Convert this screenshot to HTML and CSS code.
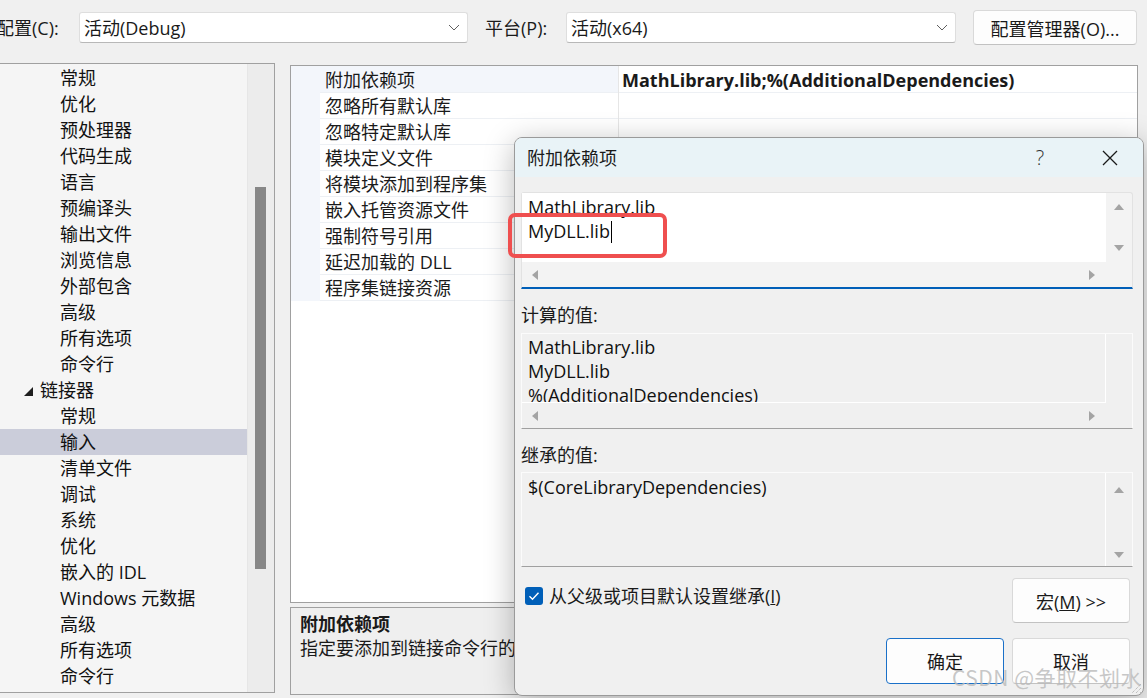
FILE: index.html
```html
<!DOCTYPE html>
<html lang="zh-CN">
<head>
<meta charset="utf-8">
<title>附加依赖项</title>
<link rel="stylesheet" href="styles.css">
</head>
<body>
<div class="page">
  <div class="topbar">
    <span class="lbl lbl-config">配置(C):</span>
    <div class="combo combo-config">
      <span class="combo-text">活动(Debug)</span>
      <svg class="chev" width="12" height="7" viewBox="0 0 12 7"><path d="M1 1 L6 6 L11 1" fill="none" stroke="#5f5f5f" stroke-width="1"/></svg>
    </div>
    <span class="lbl lbl-platform">平台(P):</span>
    <div class="combo combo-platform">
      <span class="combo-text">活动(x64)</span>
      <svg class="chev" width="12" height="7" viewBox="0 0 12 7"><path d="M1 1 L6 6 L11 1" fill="none" stroke="#5f5f5f" stroke-width="1"/></svg>
    </div>
    <button class="btn btn-manager">配置管理器(O)...</button>
  </div>

  <div class="main">
    <div class="tree">
      <ul class="tree-list">
        <li class="ti">常规</li>
        <li class="ti">优化</li>
        <li class="ti">预处理器</li>
        <li class="ti">代码生成</li>
        <li class="ti">语言</li>
        <li class="ti">预编译头</li>
        <li class="ti">输出文件</li>
        <li class="ti">浏览信息</li>
        <li class="ti">外部包含</li>
        <li class="ti">高级</li>
        <li class="ti">所有选项</li>
        <li class="ti">命令行</li>
        <li class="ti parent"><svg class="tri" width="9" height="9" viewBox="0 0 9 9"><polygon points="0,9 9,0 9,9" fill="#1e1e1e"/></svg><span>链接器</span></li>
        <li class="ti">常规</li>
        <li class="ti sel">输入</li>
        <li class="ti">清单文件</li>
        <li class="ti">调试</li>
        <li class="ti">系统</li>
        <li class="ti">优化</li>
        <li class="ti">嵌入的 IDL</li>
        <li class="ti">Windows 元数据</li>
        <li class="ti">高级</li>
        <li class="ti">所有选项</li>
        <li class="ti">命令行</li>
      </ul>
      <div class="vscroll"><div class="thumb"></div></div>
    </div>

    <div class="right">
      <div class="grid">
        <div class="prow sel"><span class="gut"></span><span class="pname">附加依赖项</span><span class="pval">MathLibrary.lib;%(AdditionalDependencies)</span></div>
        <div class="prow"><span class="gut"></span><span class="pname">忽略所有默认库</span><span class="pval"></span></div>
        <div class="prow"><span class="gut"></span><span class="pname">忽略特定默认库</span><span class="pval"></span></div>
        <div class="prow"><span class="gut"></span><span class="pname">模块定义文件</span><span class="pval"></span></div>
        <div class="prow"><span class="gut"></span><span class="pname">将模块添加到程序集</span><span class="pval"></span></div>
        <div class="prow"><span class="gut"></span><span class="pname">嵌入托管资源文件</span><span class="pval"></span></div>
        <div class="prow"><span class="gut"></span><span class="pname">强制符号引用</span><span class="pval"></span></div>
        <div class="prow"><span class="gut"></span><span class="pname">延迟加载的 DLL</span><span class="pval"></span></div>
        <div class="prow"><span class="gut"></span><span class="pname">程序集链接资源</span><span class="pval"></span></div>
      </div>
      <div class="desc">
        <div class="desc-title">附加依赖项</div>
        <div class="desc-text">指定要添加到链接命令行的附加项 [例如 kernel32.lib]</div>
      </div>
    </div>
  </div>
</div>

<div class="dialog">
  <div class="dlg-title">
    <span class="dlg-name">附加依赖项</span>
    <span class="tbtn help">?</span>
    <span class="tbtn close"><svg width="16" height="16" viewBox="0 0 16 16"><path d="M1 1 L15 15 M15 1 L1 15" stroke="#1a1a1a" stroke-width="1.3" fill="none"/></svg></span>
  </div>
  <div class="dlg-body">
    <div class="box edit">
      <div class="txt">MathLibrary.lib
MyDLL.lib<span class="caret"></span></div>
      <div class="vs"><span class="arr up"></span><span class="arr down"></span></div>
      <div class="hs"><span class="arr left"></span><span class="arr rightarr"></span></div>
      <div class="corner"></div>
    </div>

    <div class="field-label">计算的值:</div>
    <div class="box ro ro-computed">
      <div class="txt">MathLibrary.lib
MyDLL.lib
%(AdditionalDependencies)</div>
      <div class="vs"></div>
      <div class="hs"><span class="arr left"></span><span class="arr rightarr"></span></div>
      <div class="corner"></div>
    </div>

    <div class="field-label second">继承的值:</div>
    <div class="box ro ro-inherit">
      <div class="txt">$(CoreLibraryDependencies)</div>
      <div class="vs vs-inherit"><span class="arr up"></span><span class="arr down"></span></div>
    </div>

    <div class="check-row">
      <label class="chk">
        <span class="chkbox"><svg width="12" height="10" viewBox="0 0 12 10"><path d="M1.5 5.2 L4.5 8.2 L10.5 1.8" fill="none" stroke="#fff" stroke-width="1.4"/></svg></span>
        <span class="chk-text">从父级或项目默认设置继承(<u>I</u>)</span>
      </label>
      <button class="btn dbtn macro">宏(<u>M</u>) &gt;&gt;</button>
    </div>

    <div class="btn-row">
      <button class="btn dbtn primary">确定</button>
      <button class="btn dbtn">取消</button>
    </div>
  </div>
  <svg class="grip" width="12" height="12" viewBox="0 0 12 12"><path d="M11 2 L2 11 M11 6 L6 11 M11 10 L10 11" stroke="#a8a8a8" stroke-width="1" stroke-dasharray="1 1" fill="none"/></svg>
</div>

<div class="highlight"></div>
<div class="watermark">CSDN @争取不划水</div>
</body>
</html>
```

FILE: styles.css
```css
* {
  box-sizing: border-box;
  margin: 0;
  padding: 0;
}

html,
body {
  width: 1147px;
  height: 698px;
  overflow: hidden;
}

body {
  position: relative;
  background: #f0f0f0;
  font-family: "Open Sans", "Noto Sans CJK SC", sans-serif;
  font-size: 18px;
  color: #1a1a1a;
}

/* ---------- top bar ---------- */
.topbar {
  display: flex;
  align-items: center;
  height: 55px;
}

.lbl {
  white-space: nowrap;
  line-height: 24px;
}

.lbl-config {
  margin-left: -4px;
  width: 83px;
}

.lbl-platform {
  margin-left: 17px;
  width: 81px;
}

.combo {
  display: flex;
  align-items: center;
  justify-content: space-between;
  height: 31px;
  padding-left: 4px;
  padding-right: 7px;
  background: #ffffff;
  border: 1px solid #dedede;
  border-bottom-color: #b8b8b8;
  border-radius: 3px;
}

.combo-config {
  width: 389px;
}

.combo-platform {
  width: 390px;
}

.combo-text {
  line-height: 24px;
}

.btn {
  font-family: "Open Sans", "Noto Sans CJK SC", sans-serif;
  font-size: 18px;
  color: #1a1a1a;
  background: #fdfdfd;
  border: 1px solid #d9d9d9;
  border-bottom-color: #c2c2c2;
  border-radius: 4px;
}

.btn-manager {
  margin-left: 17px;
  width: 164px;
  height: 35px;
}

/* ---------- main ---------- */
.main {
  display: flex;
  margin-top: 8px;
}

.tree {
  display: flex;
  margin-left: -2px;
  width: 277px;
  height: 630px;
  border: 1px solid #a0a0a0;
  background: #f5f5f5;
}

.tree-list {
  width: 248px;
  padding-top: 1px;
  list-style: none;
}

.ti {
  display: flex;
  align-items: center;
  height: 26px;
  line-height: 26px;
  padding-left: 61px;
  white-space: nowrap;
  color: #111;
}

.ti.parent {
  padding-left: 25px;
}

.ti .tri {
  margin-right: 7px;
  margin-top: 2px;
}

.ti.sel {
  background: #cbcdda;
}

.vscroll {
  width: 27px;
  background: #ececec;
  padding-left: 7px;
  border-left: 1px solid #e6e6e6;
}

.thumb {
  width: 11px;
  height: 382px;
  margin-top: 123px;
  background: #878787;
}

/* ---------- right column ---------- */
.right {
  display: flex;
  flex-direction: column;
  margin-left: 15px;
  width: 848px;
  padding-top: 2px;
}

.grid {
  height: 538px;
  border: 1px solid #a0a0a0;
  background: #ffffff;
}

.prow {
  display: grid;
  grid-template-columns: 29px 298px 1fr;
  height: 26px;
}

.gut {
  background: #f3f6fb;
}

.pname {
  padding-left: 5px;
  padding-top: 2px;
  line-height: 24px;
  border-bottom: 1px solid #edf0f4;
  white-space: nowrap;
}

.pval {
  padding-left: 3px;
  padding-top: 2px;
  line-height: 24px;
  border-left: 1px solid #e6e6e6;
  border-bottom: 1px solid #edf0f4;
  white-space: nowrap;
  font-weight: 700;
}

.prow.sel .pname {
  background: #f3f6fb;
}

.desc {
  margin-top: 4px;
  height: 88px;
  border: 1px solid #a0a0a0;
  background: #efefef;
  padding: 4px 9px 0 9px;
  line-height: 24px;
  white-space: nowrap;
  overflow: hidden;
}

.desc-title {
  font-weight: 700;
}

/* ---------- dialog ---------- */
.dialog {
  position: absolute;
  left: 514px;
  top: 137px;
  width: 630px;
  height: 559px;
  display: flex;
  flex-direction: column;
  background: #f0f0f0;
  border: 1px solid #9a9a9a;
  border-radius: 8px;
  box-shadow: 0 6px 30px rgba(0, 0, 0, 0.28);
  overflow: hidden;
}

.dlg-title {
  display: flex;
  align-items: center;
  height: 39px;
  padding-left: 12px;
  padding-right: 10px;
  background: #e9f3f7;
}

.dlg-name {
  flex: 1;
  line-height: 24px;
}

.tbtn {
  display: flex;
  align-items: center;
  justify-content: center;
  width: 46px;
  height: 39px;
}

.help {
  font-weight: 300;
  font-size: 20px;
  color: #333;
}

.close {
  margin-left: 24px;
}

.dlg-body {
  padding: 15px 10px 0 6px;
}

.box {
  display: grid;
  grid-template-columns: 1fr 26px;
}

.edit {
  grid-template-rows: 69px 25px;
  background: #f3f3f3;
  border: 1px solid #e2e2e2;
  border-bottom: 2px solid #005fb8;
  border-radius: 3px 3px 0 0;
}

.txt {
  padding: 2px 6px 0 6px;
  line-height: 24px;
  white-space: pre;
  overflow: hidden;
  color: #111;
}

.edit .txt {
  background: #ffffff;
}

.caret {
  display: inline-block;
  width: 1px;
  height: 22px;
  margin-left: 1px;
  background: #000;
  vertical-align: -5px;
}

.vs {
  display: flex;
  flex-direction: column;
  align-items: center;
  justify-content: space-between;
  padding: 11px 0 11px 0;
}

.hs {
  display: flex;
  align-items: center;
  justify-content: space-between;
  padding: 0 11px 0 10px;
}

.arr {
  display: block;
  width: 0;
  height: 0;
}

.arr.up {
  border-left: 5px solid transparent;
  border-right: 5px solid transparent;
  border-bottom: 6px solid #a4a4a4;
}

.arr.down {
  border-left: 5px solid transparent;
  border-right: 5px solid transparent;
  border-top: 6px solid #a4a4a4;
}

.arr.left {
  border-top: 5px solid transparent;
  border-bottom: 5px solid transparent;
  border-right: 6px solid #a4a4a4;
}

.arr.rightarr {
  border-top: 5px solid transparent;
  border-bottom: 5px solid transparent;
  border-left: 6px solid #a4a4a4;
}

.field-label {
  margin-top: 14px;
  line-height: 24px;
}

.ro {
  background: #f0f0f0;
  border: 1px solid #fbfbfb;
  border-bottom: 1px solid #a0a0a0;
  margin-top: 6px;
}

.ro .txt {
  border-right: 1px solid #ffffff;
}

.ro-computed {
  grid-template-rows: 69px 25px;
}

.ro-computed .txt {
  padding-top: 1px;
  border-bottom: 1px solid #ffffff;
}

.field-label.second {
  margin-top: 14px;
}

.ro-inherit {
  height: 95px;
  margin-top: 5px;
}

.vs-inherit {
  padding: 14px 0 8px 0;
}

.check-row {
  display: flex;
  align-items: flex-start;
  justify-content: space-between;
  margin-top: 11px;
  padding-right: 3px;
}

.chk {
  display: flex;
  align-items: center;
  margin-top: 8px;
  margin-left: 4px;
}

.chkbox {
  display: flex;
  align-items: center;
  justify-content: center;
  width: 18px;
  height: 18px;
  background: #005fb8;
  border-radius: 3px;
}

.chk-text {
  margin-left: 6px;
  line-height: 20px;
  white-space: nowrap;
}

.dbtn {
  flex: 0 0 118px;
  width: 118px;
  height: 45px;
}

.btn-row {
  display: flex;
  justify-content: flex-end;
  gap: 8px;
  margin-top: 15px;
  padding-right: 3px;
}

.btn-row .dbtn {
  height: 46px;
}

.dbtn.primary {
  border: 1px solid #1a70c8;
}

.grip {
  position: absolute;
  right: 1px;
  bottom: 1px;
}

/* ---------- overlays ---------- */
.highlight {
  position: absolute;
  left: 508px;
  top: 213px;
  width: 159px;
  height: 45px;
  border: 4px solid #ef4f4f;
  border-radius: 7px;
}

.watermark {
  position: absolute;
  left: 952px;
  top: 663px;
  font-family: "Noto Sans CJK SC", sans-serif;
  font-size: 21px;
  line-height: 28px;
  letter-spacing: 0.5px;
  color: rgba(185, 185, 185, 0.8);
  white-space: nowrap;
}
```
